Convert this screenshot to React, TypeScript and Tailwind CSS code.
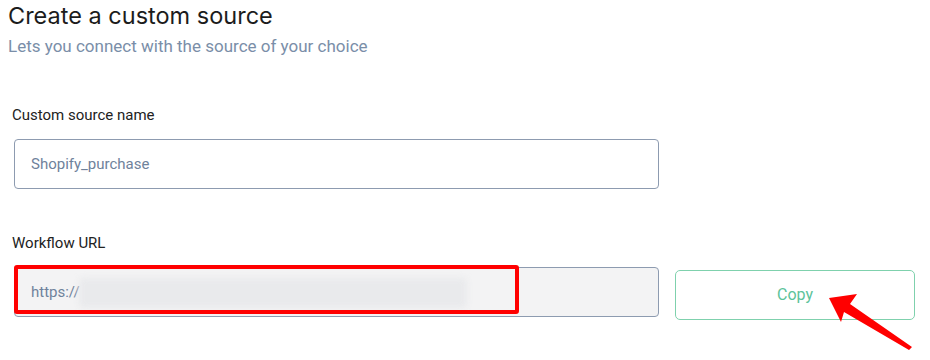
const Field = ({ label, children }: { label: string; children: React.ReactNode }) => (
  <div className="flex flex-col">
    <label className="ml-[4px] text-[15px] leading-[20px] text-[#222222] font-['Roboto',sans-serif]">
      {label}
    </label>
    {children}
  </div>
);

const App = () => {
  return (
    <div className="relative w-[930px] h-[360px] overflow-hidden bg-white pl-[8px] pt-[1px] font-['Roboto',sans-serif]">
      <h1 className="text-[23.5px] leading-[29px] text-[#1c1c1c] font-['Inter',sans-serif]">
        {"Create a custom source"}
      </h1>
      <p className="mt-[4px] text-[17px] leading-[24px] text-[#7a8ea8]">
        {"Lets you connect with the source of your choice"}
      </p>

      <div className="mt-[47px]">
        <Field label="Custom source name">
          <div className="mt-[14px] ml-[6px] w-[645px] h-[50px] flex items-center px-[16px] border border-[#8d9bb0] rounded-[4px] text-[15px] text-[#6f829b]">
            {"Shopify_purchase"}
          </div>
        </Field>
      </div>

      <div className="mt-[44px]">
        <Field label="Workflow URL">
          <div className="mt-[14px] ml-[6px] flex items-start gap-[16px]">
            <div className="relative w-[645px] h-[50px] flex items-center px-[16px] border border-[#8d9bb0] rounded-[4px] bg-[#f3f3f4] text-[15px] text-[#6f829b]">
              <span>{"https://"}</span>
              <div className="absolute left-[64px] top-[10px] w-[388px] h-[30px] bg-[#e9eaec] blur-[3px] rounded-[4px]" />
              <div className="absolute left-[-1px] top-[-3px] w-[505px] h-[49px] border-[4px] border-[#ff0000] rounded-[3px]" />
            </div>
            <button
              type="button"
              className="mt-[3px] w-[240px] h-[50px] border border-[#7fd1ad] rounded-[5px] text-[16px] text-[#5cc39a] bg-white"
            >
              {"Copy"}
            </button>
          </div>
        </Field>
      </div>

      <svg className="absolute left-0 top-0" width="930" height="360" viewBox="0 0 930 360">
        <polygon
          points="829,298 857,294 850,304 912,347 909,350 844,312 841,322"
          fill="#ff0000"
        />
      </svg>
    </div>
  );
};

export default App;
